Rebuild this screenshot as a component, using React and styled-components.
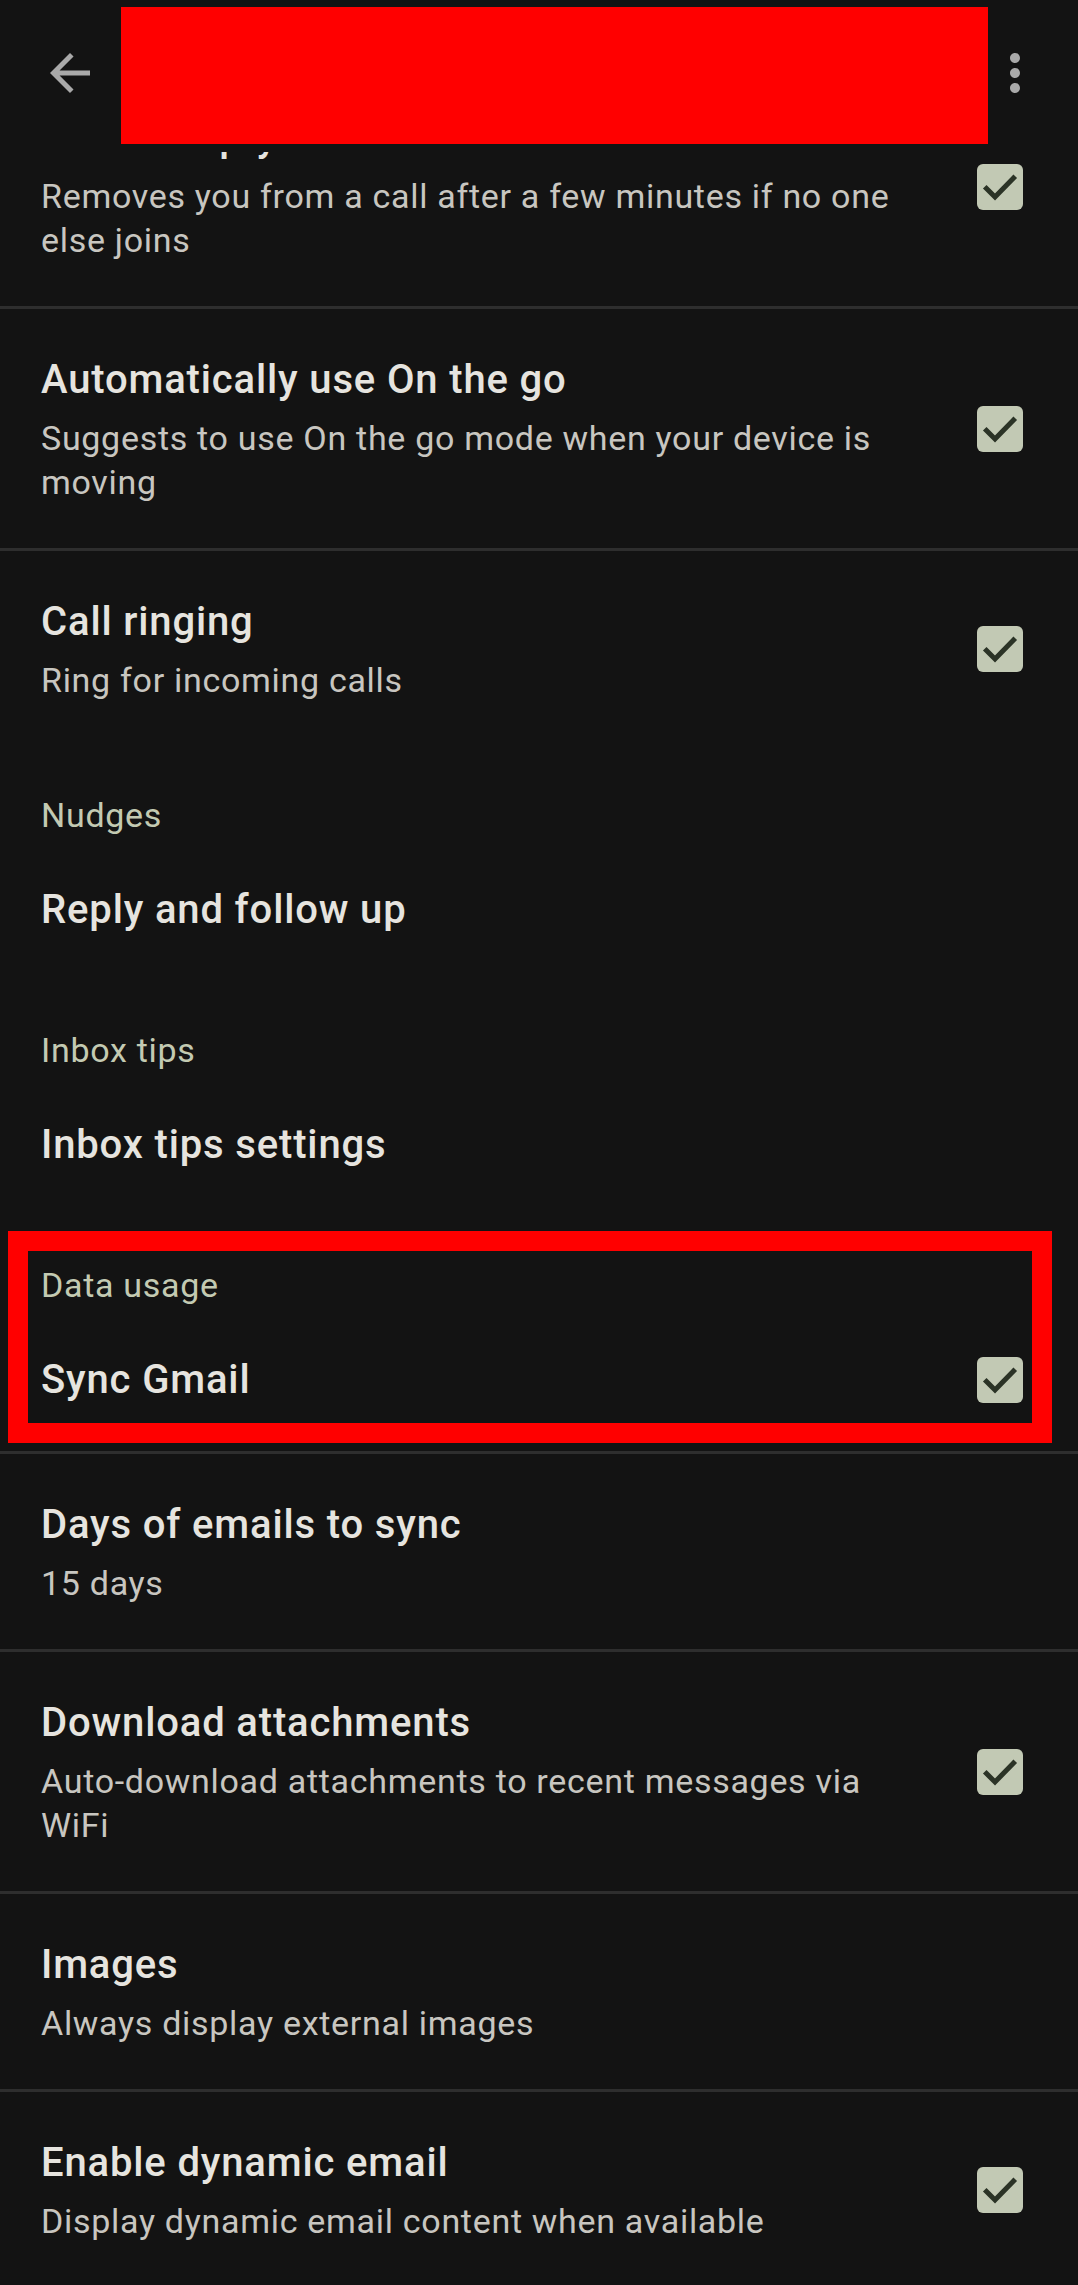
import React from "react";
import styled, { createGlobalStyle } from "styled-components";

const GlobalStyle = createGlobalStyle`
  html, body {
    margin: 0;
    padding: 0;
    background: #131313;
  }
  body {
    font-family: Roboto, "Noto Sans", "Liberation Sans", sans-serif;
    -webkit-font-smoothing: antialiased;
  }
`;

const Screen = styled.div`
  width: 1078px;
  height: 100vh;
  background: #131313;
  display: flex;
  flex-direction: column;
  overflow: hidden;
`;

const AppBar = styled.header`
  flex: 0 0 152px;
  height: 152px;
  display: flex;
  align-items: flex-start;
  background: #131313;
`;

const IconButton = styled.div`
  width: 60px;
  height: 60px;
  margin-top: 43px;
  margin-left: ${({ $ml }) => $ml}px;
  color: #a9a9a9;
  svg {
    display: block;
    width: 60px;
    height: 60px;
    fill: currentColor;
  }
`;

const Redaction = styled.div`
  width: 867px;
  height: 137px;
  margin-top: 7px;
  margin-left: 21px;
  background: #ff0000;
`;

const Viewport = styled.main`
  flex: 1;
  overflow: hidden;
`;

const List = styled.div`
  margin-top: -84.6px;
  display: flex;
  flex-direction: column;
`;

const Row = styled.div`
  display: flex;
  align-items: center;
  padding: 45px 55px ${({ $single }) => ($single ? "45.5px" : "44px")} 41px;
  border-bottom: ${({ $divider }) => ($divider ? "3px solid #2e2e2e" : "none")};
`;

const TextBlock = styled.div`
  flex: 1;
  min-width: 0;
  display: flex;
  flex-direction: column;
`;

const Title = styled.div`
  font-size: 40px;
  line-height: 52px;
  font-weight: 500;
  letter-spacing: 0.85px;
  color: #e6e4df;
`;

const Summary = styled.div`
  margin-top: 10px;
  font-size: 34px;
  line-height: 44px;
  letter-spacing: 0.7px;
  color: #c8c6c0;
`;

const Header = styled.div`
  padding: 46.5px 41px 2px;
  font-size: 34px;
  line-height: 44px;
  letter-spacing: 0.7px;
  color: #c3cab2;
`;

const Highlight = styled.div`
  position: relative;
  &::after {
    content: "";
    position: absolute;
    top: 15px;
    left: 8px;
    right: 26px;
    bottom: 11px;
    border: 20px solid #ff0000;
    pointer-events: none;
  }
`;

const CheckBox = styled.svg`
  flex: 0 0 46px;
  width: 46px;
  height: 46px;
  margin-left: 67px;
  display: block;
`;

const Check = () => (
  <CheckBox viewBox="0 0 46 46">
    <rect x="0" y="0" width="46" height="46" rx="6" fill="#c2c9b4" />
    <polyline
      points="9.5,24.5 18,33 36.5,14"
      fill="none"
      stroke="#2b3326"
      strokeWidth="5"
      strokeLinecap="square"
    />
  </CheckBox>
);

const Setting = ({ title, summary, checked, divider }) => (
  <Row $divider={divider} $single={!summary}>
    <TextBlock>
      <Title>{title}</Title>
      {summary && <Summary>{summary}</Summary>}
    </TextBlock>
    {checked && <Check />}
  </Row>
);

export default function App() {
  return (
    <Screen>
      <GlobalStyle />
      <AppBar>
        <IconButton $ml={40}>
          <svg viewBox="0 0 24 24">
            <path d="M20 11H7.83l5.59-5.59L12 4l-8 8 8 8 1.41-1.41L7.83 13H20v-2z" />
          </svg>
        </IconButton>
        <Redaction />
        <IconButton $ml={-3}>
          <svg viewBox="0 0 24 24">
            <path d="M12 8c1.1 0 2-.9 2-2s-.9-2-2-2-2 .9-2 2 .9 2 2 2zm0 2c-1.1 0-2 .9-2 2s.9 2 2 2 2-.9 2-2-.9-2-2-2zm0 6c-1.1 0-2 .9-2 2s.9 2 2 2 2-.9 2-2-.9-2-2-2z" />
          </svg>
        </IconButton>
      </AppBar>

      <Viewport>
        <List>
          <Setting
            title="Leave empty calls"
            summary="Removes you from a call after a few minutes if no one else joins"
            checked
            divider
          />
          <Setting
            title="Automatically use On the go"
            summary="Suggests to use On the go mode when your device is moving"
            checked
            divider
          />
          <Setting title="Call ringing" summary="Ring for incoming calls" checked />

          <Header>Nudges</Header>
          <Setting title="Reply and follow up" />

          <Header>Inbox tips</Header>
          <Setting title="Inbox tips settings" />

          <Highlight>
            <Header>Data usage</Header>
            <Setting title="Sync Gmail" checked divider />
          </Highlight>

          <Setting title="Days of emails to sync" summary="15 days" divider />
          <Setting
            title="Download attachments"
            summary="Auto-download attachments to recent messages via WiFi"
            checked
            divider
          />
          <Setting title="Images" summary="Always display external images" divider />
          <Setting
            title="Enable dynamic email"
            summary="Display dynamic email content when available"
            checked
          />
        </List>
      </Viewport>
    </Screen>
  );
}
